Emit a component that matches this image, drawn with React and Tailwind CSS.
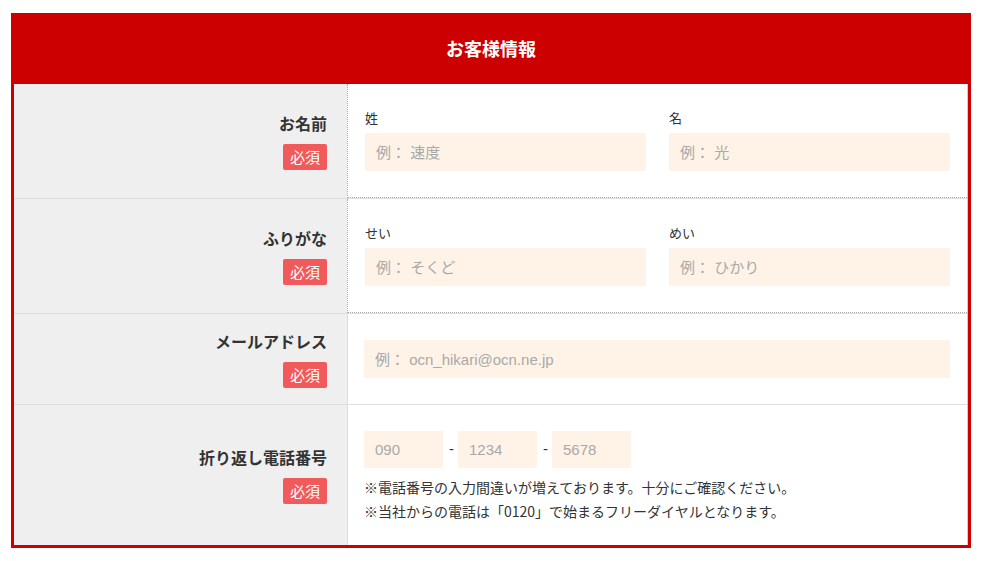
import React from "react";

const font = { fontFamily: '"Liberation Sans", "Noto Sans CJK JP", sans-serif' };
const jp = { fontFamily: '"Noto Sans CJK JP", sans-serif' };

const Badge = () => (
  <span className="inline-flex h-[26px] w-[44px] items-center justify-center rounded-[2px] bg-[#f05a5a] text-[15px] leading-none text-white">
    必須
  </span>
);

const RowLabel = ({ children }) => (
  <div className="flex w-[333px] shrink-0 flex-col items-end justify-center gap-[11px] bg-[#efefef] pr-[20px]" style={jp}>
    <div className="text-[16px] font-bold leading-[20px] text-[#333]">{children}</div>
    <Badge />
  </div>
);

const Field = ({ placeholder, className = "" }) => (
  <input
    placeholder={placeholder}
    className={`h-[38px] bg-[#fef3e6] px-[11px] text-[15px] text-[#333] outline-none placeholder:text-[#a9a9a9] ${className}`}
  />
);

const NameRow = ({ label, first, second }) => (
  <div className="flex">
    <RowLabel>{label}</RowLabel>
    <div className="flex flex-1 gap-[23px] border-b border-l border-dotted border-[#aaa] bg-white pt-[24px] pr-[17px] pb-[26px] pl-[17px]">
      {[first, second].map(([head, ph]) => (
        <div key={head} className="flex flex-1 flex-col">
          <div className="mb-[5px] text-[13px] leading-[20px] text-[#333]" style={jp}>{head}</div>
          <Field placeholder={ph} className="w-full" />
        </div>
      ))}
    </div>
  </div>
);

export default function App() {
  return (
    <div className="min-h-screen bg-white pt-[13px] pl-[11px]" style={font}>
      <div className="w-[960px] border-[3px] border-t-0 border-[#cc0000]">
        <div className="flex h-[71px] items-center justify-center bg-[#cc0000] text-[18px] font-bold text-white" style={jp}>
          お客様情報
        </div>
        <div className="border-r border-[#ccc]">
          <div className="border-b border-[#ddd]">
            <NameRow label="お名前" first={["姓", "例： 速度"]} second={["名", "例： 光"]} />
          </div>
          <div className="border-b border-[#ddd]">
            <NameRow label="ふりがな" first={["せい", "例： そくど"]} second={["めい", "例： ひかり"]} />
          </div>
          <div className="flex border-b border-[#ddd]">
            <RowLabel>メールアドレス</RowLabel>
            <div className="flex-1 border-l border-[#ddd] bg-white py-[26px] pr-[17px] pl-[16px]">
              <Field placeholder="例： ocn_hikari@ocn.ne.jp" className="w-full" />
            </div>
          </div>
          <div className="flex">
            <RowLabel>折り返し電話番号</RowLabel>
            <div className="flex-1 border-l border-[#ddd] bg-white pt-[26px] pr-[17px] pb-[22px] pl-[16px]">
              <div className="flex items-center gap-[6px] text-[15px] text-[#333]">
                <Field placeholder="090" className="!h-[37px] w-[79px]" />
                <span className="w-[3px] text-center">-</span>
                <Field placeholder="1234" className="!h-[37px] w-[79px]" />
                <span className="w-[3px] text-center">-</span>
                <Field placeholder="5678" className="!h-[37px] w-[79px]" />
              </div>
              <div className="mt-[7px] text-[14px] leading-[24px] text-[#333]" style={jp}>
                <p>※電話番号の入力間違いが増えております。十分にご確認ください。</p>
                <p>※当社からの電話は「0120」で始まるフリーダイヤルとなります。</p>
              </div>
            </div>
          </div>
        </div>
      </div>
    </div>
  );
}
